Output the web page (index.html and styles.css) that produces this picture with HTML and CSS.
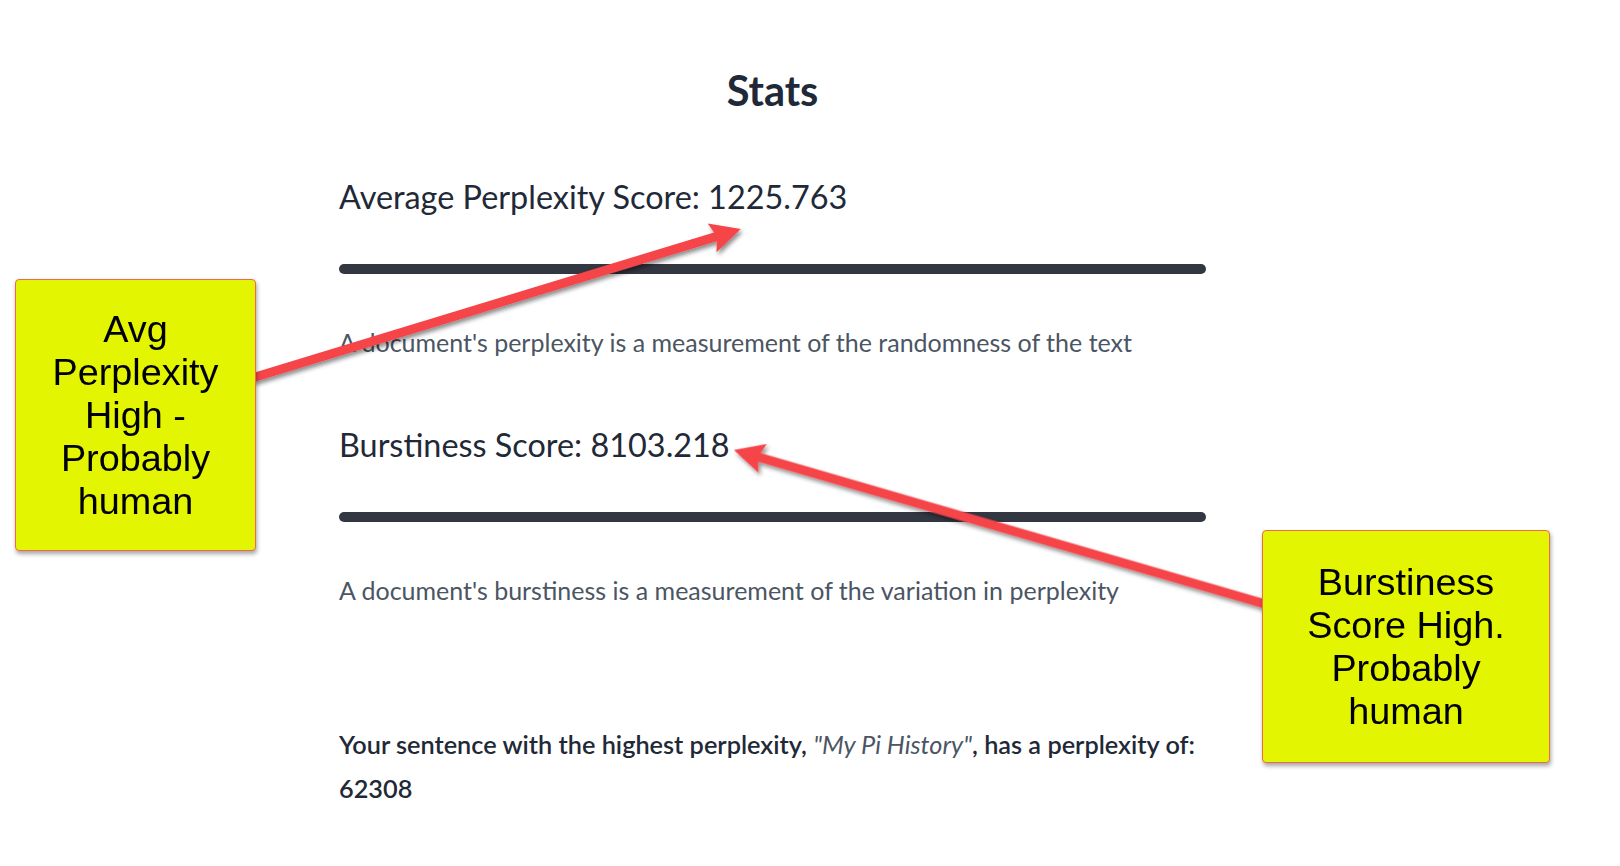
FILE: index.html
```html
<!DOCTYPE html>
<html lang="en">
<head>
<meta charset="utf-8">
<title>Stats</title>
<link rel="stylesheet" href="styles.css">
</head>
<body>
<main class="page">
  <h1 class="title">Stats</h1>
  <section class="metric">
    <h2 class="metric-title">Average Perplexity Score: 1225.763</h2>
    <div class="bar"></div>
    <p class="metric-desc">A document's perplexity is a measurement of the randomness of the text</p>
  </section>
  <section class="metric">
    <h2 class="metric-title">Burstiness Score: 8103.218</h2>
    <div class="bar"></div>
    <p class="metric-desc">A document's burstiness is a measurement of the variation in perplexity</p>
  </section>
  <p class="highlight">Your sentence with the highest perplexity, <em class="quote">"My Pi History"</em>, has a perplexity of: 62308</p>
</main>

<svg class="arrows" width="1620" height="866" viewBox="0 0 1620 866" aria-hidden="true">
  <defs>
    <filter id="arrow-shadow" x="-20%" y="-50%" width="140%" height="200%">
      <feDropShadow dx="2" dy="3" stdDeviation="2" flood-color="#000" flood-opacity="0.45"/>
    </filter>
  </defs>
  <g filter="url(#arrow-shadow)" fill="#f5444a">
    <g transform="translate(252 378) rotate(-16.94)">
      <rect x="0" y="-4.5" width="486" height="9"/>
      <polygon points="511,0 481,-15 486,0 481,15"/>
    </g>
    <g transform="translate(1265 604) rotate(-163.83)">
      <rect x="0" y="-4.5" width="528" height="9"/>
      <polygon points="553,0 523,-15 528,0 523,15"/>
    </g>
  </g>
</svg>

<div class="callout callout-left">Avg Perplexity High - Probably human</div>
<div class="callout callout-right">Burstiness Score High. Probably human</div>
</body>
</html>
```
FILE: styles.css
```css
html, body {
  margin: 0;
  padding: 0;
  background: #ffffff;
}
body {
  position: relative;
  width: 1620px;
  height: 866px;
  overflow: hidden;
  font-family: Lato, "Noto Sans", sans-serif;
  color: #1f2937;
}
.page {
  width: 867px;
  margin-left: 339px;
  padding-top: 65px;
}
.title {
  margin: 0 0 62px;
  font-size: 41.5px;
  line-height: 50px;
  font-weight: 700;
  text-align: center;
  color: #1f2937;
}
.metric + .metric {
  margin-top: 65px;
}
.metric-title {
  margin: 0;
  font-size: 32.4px;
  line-height: 40px;
  font-weight: 400;
  color: #1f2937;
}
.bar {
  height: 10px;
  margin: 47px 0 50px;
  border-radius: 5px;
  background: #333742;
}
.metric-desc {
  margin: 0;
  font-size: 25px;
  line-height: 36px;
  color: #4b5563;
}
.highlight {
  margin: 114px 0 0;
  font-size: 25.3px;
  line-height: 44px;
  font-weight: 600;
  color: #1f2937;
}
.quote {
  font-weight: 400;
  color: #4b5563;
}
.arrows {
  position: absolute;
  left: 0;
  top: 0;
  z-index: 1;
  pointer-events: none;
}
.callout {
  position: absolute;
  z-index: 2;
  box-sizing: border-box;
  display: flex;
  align-items: center;
  justify-content: center;
  text-align: center;
  background: #e3f500;
  border: 1px solid #ef6a4c;
  border-radius: 4px;
  box-shadow: 1px 3px 4px rgba(0, 0, 0, 0.35);
  font-family: "Liberation Sans", Arial, sans-serif;
  font-size: 37.8px;
  line-height: 43px;
  color: #000;
}
.callout-left {
  left: 15px;
  top: 279px;
  width: 241px;
  height: 272px;
  padding: 0 12px;
}
.callout-right {
  left: 1262px;
  top: 530px;
  width: 288px;
  height: 233px;
  padding: 0 26px;
}
```
